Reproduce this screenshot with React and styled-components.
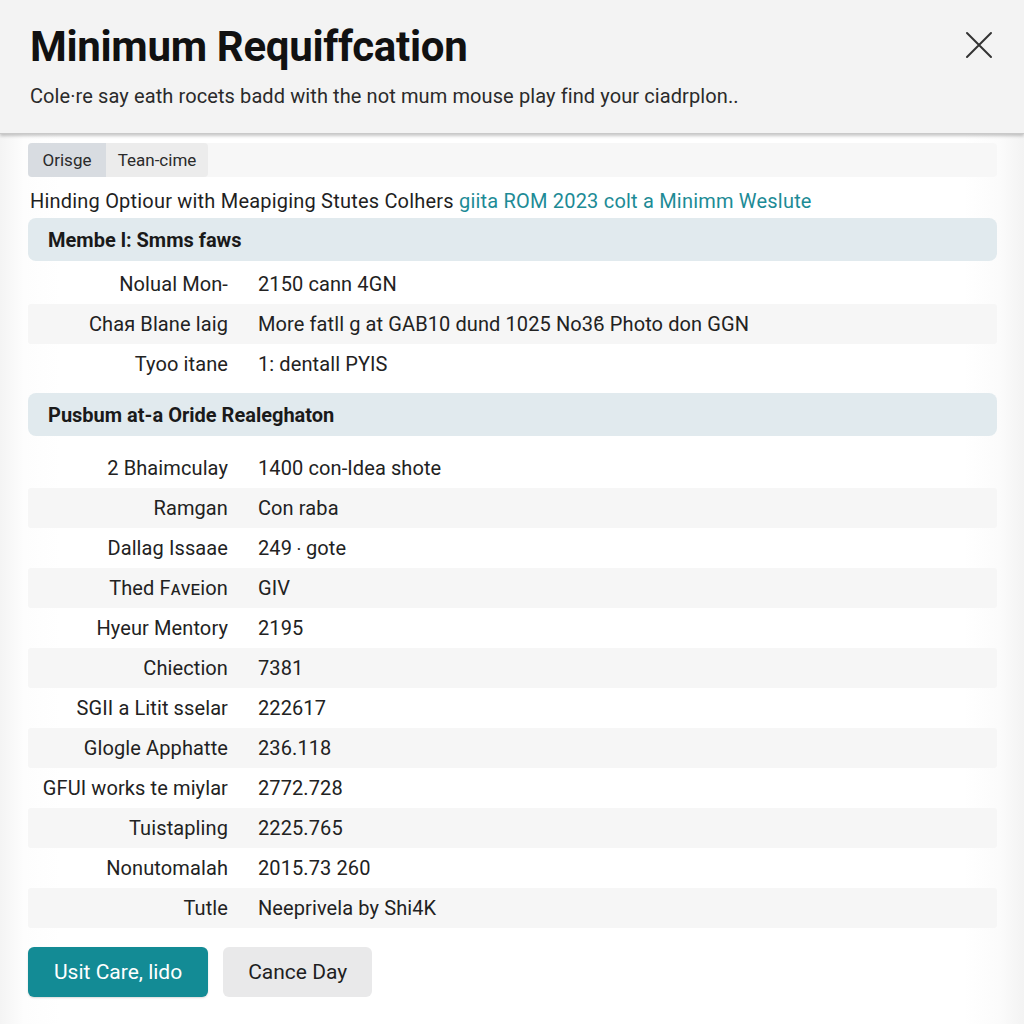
import React from "react";
import styled, { createGlobalStyle } from "styled-components";

const Global = createGlobalStyle`
  html, body { margin: 0; padding: 0; background: #f6f6f6; }
  body { font-family: Roboto, "Liberation Sans", Arial, sans-serif; color: #1f1f1f; }
  * { box-sizing: border-box; }
`;

const Page = styled.div`
  width: 1024px;
  height: 1024px;
  display: flex;
  flex-direction: column;
  background: linear-gradient(90deg, #f4f4f4 0px, #fdfdfd 24px, #ffffff 60px, #ffffff 964px, #fbfbfb 1000px, #f3f3f3 1024px);
  overflow: hidden;
`;

const Header = styled.header`
  position: relative;
  height: 134px;
  flex: none;
  background: #f3f3f3;
  padding: 23px 30px 0 30px;
  box-shadow: 0 2px 3px rgba(0, 0, 0, 0.22);
  border-bottom: 1px solid #c9c9c9;
  z-index: 1;
`;

const Title = styled.h1`
  margin: 0;
  font-size: 42px;
  line-height: 48px;
  font-weight: 700;
  letter-spacing: -0.3px;
  color: #111;
`;

const Subtitle = styled.p`
  margin: 12px 0 0 0;
  font-size: 20px;
  line-height: 26px;
  color: #2a2a2a;
  letter-spacing: 0.1px;
`;

const Close = styled.button`
  position: absolute;
  top: 30px;
  right: 30px;
  width: 30px;
  height: 30px;
  padding: 0;
  border: none;
  background: transparent;
  display: flex;
  align-items: center;
  justify-content: center;
`;

const Body = styled.main`
  flex: 1;
  display: flex;
  flex-direction: column;
  padding: 9px 27px 0 28px;
`;

const TabBar = styled.div`
  display: flex;
  height: 34px;
  background: #f7f7f7;
  border-radius: 4px;
`;

const Tab = styled.div`
  display: flex;
  align-items: center;
  justify-content: center;
  font-size: 17px;
  color: #2a2a2a;
  background: ${(p) => (p.$active ? "#d8dce1" : "#ececec")};
  border-radius: ${(p) => (p.$active ? "4px 0 0 4px" : "0 4px 4px 0")};
  width: ${(p) => p.$w}px;
`;

const Intro = styled.p`
  margin: 11px 0 0 2px;
  font-size: 20px;
  line-height: 26px;
  color: #1f1f1f;
  letter-spacing: 0.2px;
`;

const Teal = styled.span`
  color: #1d8b96;
`;

const SectionHead = styled.div`
  height: 43px;
  margin-top: ${(p) => p.$mt}px;
  margin-bottom: ${(p) => p.$mb}px;
  background: #e1eaee;
  border-radius: 8px;
  display: flex;
  align-items: center;
  padding-left: 20px;
  font-size: 20px;
  font-weight: 700;
  color: #1a1a1a;
  letter-spacing: 0;
`;

const Row = styled.div`
  height: 40px;
  display: grid;
  grid-template-columns: 200px 1fr;
  column-gap: 30px;
  align-items: center;
  background: ${(p) => (p.$alt ? "#f6f6f6" : "transparent")};
  border-radius: 3px;
  font-size: 20px;
  color: #222;
  letter-spacing: 0.1px;
`;

const Label = styled.span`
  text-align: right;
  white-space: nowrap;
`;

const Value = styled.span`
  white-space: nowrap;
`;

const Actions = styled.div`
  display: flex;
  gap: 15px;
  margin-top: 19px;
`;

const Button = styled.button`
  height: 50px;
  padding: 0 ${(p) => (p.$primary ? "26px" : "25px")};
  border-radius: 6px;
  border: none;
  font-family: inherit;
  font-size: 21px;
  letter-spacing: 0;
  color: ${(p) => (p.$primary ? "#ffffff" : "#1f1f1f")};
  background: ${(p) => (p.$primary ? "#138b95" : "#e9e9ea")};
  box-shadow: ${(p) => (p.$primary ? "0 1px 2px rgba(0,0,0,0.15)" : "none")};
`;

const section1 = [
  ["Nolual Mon-", "2150 cann 4GN"],
  ["Chaя Blane laig", "More fatll g at GAB10 dund 1025 No3ϐ Photo don GGN"],
  ["Tyoo itane", "1: dentall PYIS"],
];

const section2 = [
  ["2 Bhaimculay", "1400 con-Idea shote"],
  ["Ramgan", "Con raba"],
  ["Dallag Issaae", "249 ‧ gote"],
  ["Thed Fᴀvᴇion", "GIV"],
  ["Hyeur Mentory", "2195"],
  ["Chiection", "7381"],
  ["SGII a Litit sselar", "222617"],
  ["Glogle Apphatte", "236.118"],
  ["GFUI works te miylar", "2772.728"],
  ["Tuistapling", "2225.765"],
  ["Nonutomalah", "2015.73 260"],
  ["Tutle", "Neeprivela by Shi4K"],
];

export default function App() {
  return (
    <>
      <Global />
      <Page>
        <Header>
          <Title>Minimum Requiffcation</Title>
          <Subtitle>
            Cole·re say eath rocets badd with the not mum mouse play find your ciadrplon..
          </Subtitle>
          <Close aria-label="Close">
            <svg width="28" height="28" viewBox="0 0 28 28">
              <path d="M2 2 L26 26 M26 2 L2 26" stroke="#333" strokeWidth="2" strokeLinecap="round" />
            </svg>
          </Close>
        </Header>
        <Body>
          <TabBar>
            <Tab $active $w={78}>Orisge</Tab>
            <Tab $w={102}>Tean-cime</Tab>
          </TabBar>
          <Intro>
            Hinding Optiour with Meapiging Stutes Colhers <Teal>giita ROM 2023 colt a Minimm Weslute</Teal>
          </Intro>
          <SectionHead $mt={4} $mb={3}>Membe l: Smms faws</SectionHead>
          {section1.map(([l, v], i) => (
            <Row key={l} $alt={i % 2 === 1}>
              <Label>{l}</Label>
              <Value>{v}</Value>
            </Row>
          ))}
          <SectionHead $mt={9} $mb={12}>Pusbum at-a Oride Realeghaton</SectionHead>
          {section2.map(([l, v], i) => (
            <Row key={l} $alt={i % 2 === 1}>
              <Label>{l}</Label>
              <Value>{v}</Value>
            </Row>
          ))}
          <Actions>
            <Button $primary>Usit Care, lido</Button>
            <Button>Cance Day</Button>
          </Actions>
        </Body>
      </Page>
    </>
  );
}
